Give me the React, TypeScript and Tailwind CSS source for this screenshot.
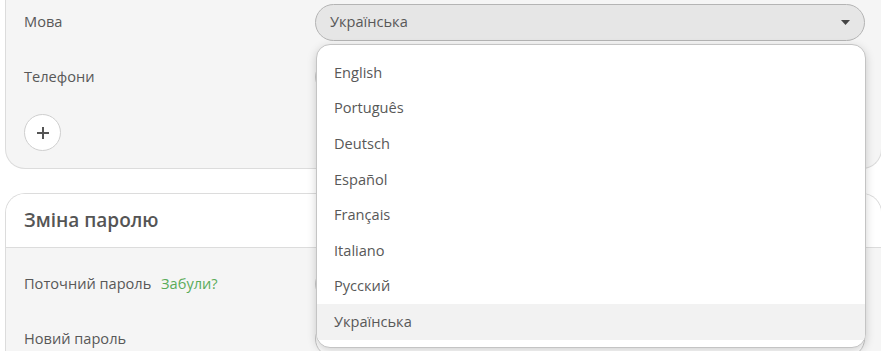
import React from 'react';

const languages = ['English', 'Português', 'Deutsch', 'Español', 'Français', 'Italiano', 'Русский', 'Українська'];

const Field: React.FC = () => (
  <div className="h-[36px] flex-1 rounded-full border border-[#c8c8c8] bg-white" />
);

const App: React.FC = () => {
  return (
    <div className="relative min-h-screen overflow-hidden bg-white pl-[5px] font-['Open_Sans',sans-serif] text-[14.6px] text-[#585858]">
      {/* profile card */}
      <div className="w-[877px] rounded-b-[20px] border border-t-0 border-[#dcdcdc] bg-[#f5f5f5] pb-[17px] pl-[18px] pr-[16px]">
        <div className="flex h-[44px] items-center">
          <div className="w-[291px]">Мова</div>
          <div className="flex h-[37px] flex-1 items-center justify-between rounded-full border border-[#b4b4b4] bg-[#e6e6e6] pl-[14px] pr-[14px]">
            <span>Українська</span>
            <svg width="9" height="5" viewBox="0 0 9 5">
              <path d="M0 0h9L4.5 5z" fill="#444" />
            </svg>
          </div>
        </div>
        <div className="mt-[11px] flex h-[44px] items-center">
          <div className="w-[291px]">Телефони</div>
          <Field />
        </div>
        <div className="mt-[15px] flex">
          <button className="flex h-[37px] w-[37px] items-center justify-center rounded-full border border-[#cfcfcf] bg-white">
            <svg width="14" height="14" viewBox="0 0 14 14">
              <path d="M7 1v12M1 7h12" stroke="#555" strokeWidth="2" />
            </svg>
          </button>
        </div>
      </div>

      {/* password card */}
      <div className="mt-[24px] w-[877px] overflow-hidden rounded-t-[20px] border border-b-0 border-[#dcdcdc]">
        <div className="flex h-[54px] items-center border-b border-[#dcdcdc] bg-white pl-[18px]">
          <h3 className="text-[19px] font-semibold text-[#555]">Зміна паролю</h3>
        </div>
        <div className="bg-[#f5f5f5] pb-[20px] pl-[18px] pr-[16px] pt-[14px]">
          <div className="flex h-[44px] items-center">
            <div className="w-[291px]">
              Поточний пароль <span className="ml-[6px] text-[#5aac5a]">Забули?</span>
            </div>
            <Field />
          </div>
          <div className="mt-[11px] flex h-[44px] items-center">
            <div className="w-[291px]">Новий пароль</div>
            <Field />
          </div>
        </div>
      </div>

      {/* language dropdown */}
      <div className="absolute left-[316px] top-[44px] w-[550px] overflow-hidden rounded-[14px] border border-[#c4c4c4] bg-white pb-[7px] pt-[10px] shadow-[0_3px_10px_rgba(0,0,0,0.18)]">
        {languages.map(lang => (
          <div
            key={lang}
            className={`flex h-[35.6px] items-center pl-[17px] ${lang === 'Українська' ? 'bg-[#f2f2f2]' : ''}`}
          >
            {lang}
          </div>
        ))}
      </div>
    </div>
  );
};

export default App;
